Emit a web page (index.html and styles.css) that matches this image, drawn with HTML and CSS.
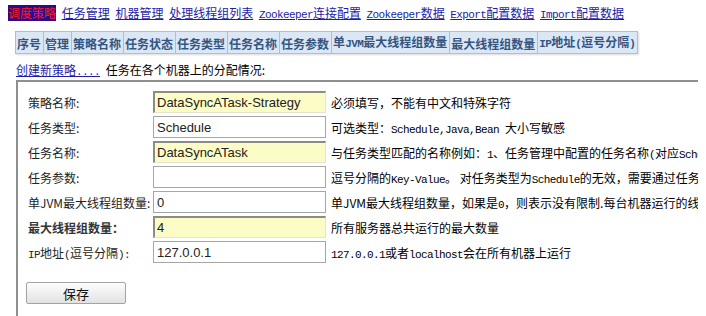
FILE: index.html
```html
<!DOCTYPE html>
<html lang="zh-CN">
<head>
    <meta charset="UTF-8">
    <title>调度策略</title>
    <link rel="stylesheet" href="styles.css">
</head>
<body>
    <!-- 顶部导航 -->
    <div class="nav">
        <span class="current">调度策略</span>
        <a href="#">任务管理</a>
        <a href="#">机器管理</a>
        <a href="#">处理线程组列表</a>
        <a href="#"><span class="en">Zookeeper</span>连接配置</a>
        <a href="#"><span class="en">Zookeeper</span>数据</a>
        <a href="#"><span class="en">Export</span>配置数据</a>
        <a href="#"><span class="en">Import</span>配置数据</a>
    </div>

    <!-- 策略列表表头 -->
    <table class="list">
        <tr>
            <th>序号</th>
            <th>管理</th>
            <th>策略名称</th>
            <th>任务状态</th>
            <th>任务类型</th>
            <th>任务名称</th>
            <th>任务参数</th>
            <th>单<span class="en">JVM</span>最大线程组数量</th>
            <th>最大线程组数量</th>
            <th><span class="en">IP</span>地址<span class="en">(</span>逗号分隔<span class="en">)</span></th>
        </tr>
    </table>

    <div class="caption">
        <a href="#">创建新策略<span class="en">....</span></a>
        <span>任务在各个机器上的分配情况:</span>
    </div>

    <!-- 编辑表单 -->
    <div class="edit-box">
        <form class="edit-form">
            <label>策略名称:</label>
            <input type="text" class="required" value="DataSyncATask-Strategy">
            <div class="desc">必须填写，不能有中文和特殊字符</div>

            <label>任务类型:</label>
            <input type="text" value="Schedule">
            <div class="desc">可选类型：<span class="en">Schedule,Java,Bean </span>大小写敏感</div>

            <label>任务名称:</label>
            <input type="text" class="required" value="DataSyncATask">
            <div class="desc">与任务类型匹配的名称例如：<span class="en">1</span>、任务管理中配置的任务名称<span class="en">(</span>对应<span class="en">Schedule</span>中的<span class="en">BeanName)</span></div>

            <label>任务参数:</label>
            <input type="text" value="">
            <div class="desc">逗号分隔的<span class="en">Key-Value</span>。 对任务类型为<span class="en">Schedule</span>的无效，需要通过任务管理来配置的</div>

            <label>单JVM最大线程组数量:</label>
            <input type="text" value="0">
            <div class="desc">单JVM最大线程组数量，如果是<span class="en">0</span>，则表示没有限制.每台机器运行的线程组数量 =总量/机器数</div>

            <label class="strong">最大线程组数量：</label>
            <input type="text" class="required" value="4">
            <div class="desc">所有服务器总共运行的最大数量</div>

            <label><span class="en">IP</span>地址<span class="en">(</span>逗号分隔<span class="en">):</span></label>
            <input type="text" value="127.0.0.1">
            <div class="desc"><span class="en">127.0.0.1</span>或者<span class="en">localhost</span>会在所有机器上运行</div>
        </form>
        <button type="button" class="save">保存</button>
    </div>
</body>
</html>
```

FILE: styles.css
```css
html, body {
    overflow: hidden;
}
body {
    margin: 5px 8px 0 8px;
    font-family: "Noto Sans CJK SC", sans-serif;
    font-size: 12px;
    color: #000;
    background: #fff;
}
.en {
    font-family: "Liberation Mono", monospace;
    font-size: 11px;
    letter-spacing: -0.6px;
}
a {
    color: #1c1ca8;
    text-decoration: underline;
}
.nav {
    line-height: 16px;
    white-space: nowrap;
}
.nav a {
    margin-left: 3px;
}
.current {
    background-color: #2c0a8e;
    color: #ff1a1a;
}
.list {
    margin: 8px 0 0 7px;
    border-collapse: collapse;
    border: 1px solid #9fb6d3;
    box-shadow: 1px 1px 2px rgba(0,0,0,0.15);
}
.list th {
    background-color: #dce7f6;
    color: #34557f;
    font-weight: bold;
    font-size: 12px;
    line-height: 15px;
    padding: 2px 2px 1px 1px;
    border: 1px solid #aabfd9;
    white-space: nowrap;
}
.caption {
    margin: 8px 0 0 8px;
    line-height: 15px;
    white-space: nowrap;
}
.caption a {
    margin-right: 3px;
}
.edit-box {
    margin-left: 8px;
    width: 900px;
    height: 260px;
    border-top: 2px solid #8f8f8f;
    border-left: 2px solid #8f8f8f;
    padding: 9px 0 0 10px;
}
.edit-form {
    display: grid;
    grid-template-columns: 125px 173px auto;
    grid-auto-rows: 22px;
    row-gap: 3px;
    align-items: center;
}
.edit-form label {
    color: #222;
    white-space: nowrap;
}
.edit-form label.strong {
    font-weight: 600;
    color: #333;
}
.edit-form input {
    box-sizing: border-box;
    width: 173px;
    height: 22px;
    margin: 0;
    padding: 0 3px;
    font-family: "Liberation Sans", Arial, sans-serif;
    font-size: 13px;
    color: #222;
    border: 1px solid #a6a6a6;
    background: #fff;
}
.edit-form input.required {
    background-color: #fcfcc6;
    border-top: 2px solid #8c8c80;
    border-left: 2px solid #8c8c80;
    border-right: 1px solid #e4e4d0;
    border-bottom: 1px solid #e4e4d0;
    padding-left: 2px;
}
.desc {
    margin-left: 5px;
    white-space: nowrap;
}
.save {
    margin: 19px 0 0 -2px;
    width: 100px;
    height: 22px;
    font-family: "Noto Sans CJK SC", sans-serif;
    font-size: 13px;
    color: #111;
    background: linear-gradient(#fdfdfd, #e2e2e2);
    border: 1px solid #a3a3a3;
    border-radius: 2px;
    padding: 0;
}
```
